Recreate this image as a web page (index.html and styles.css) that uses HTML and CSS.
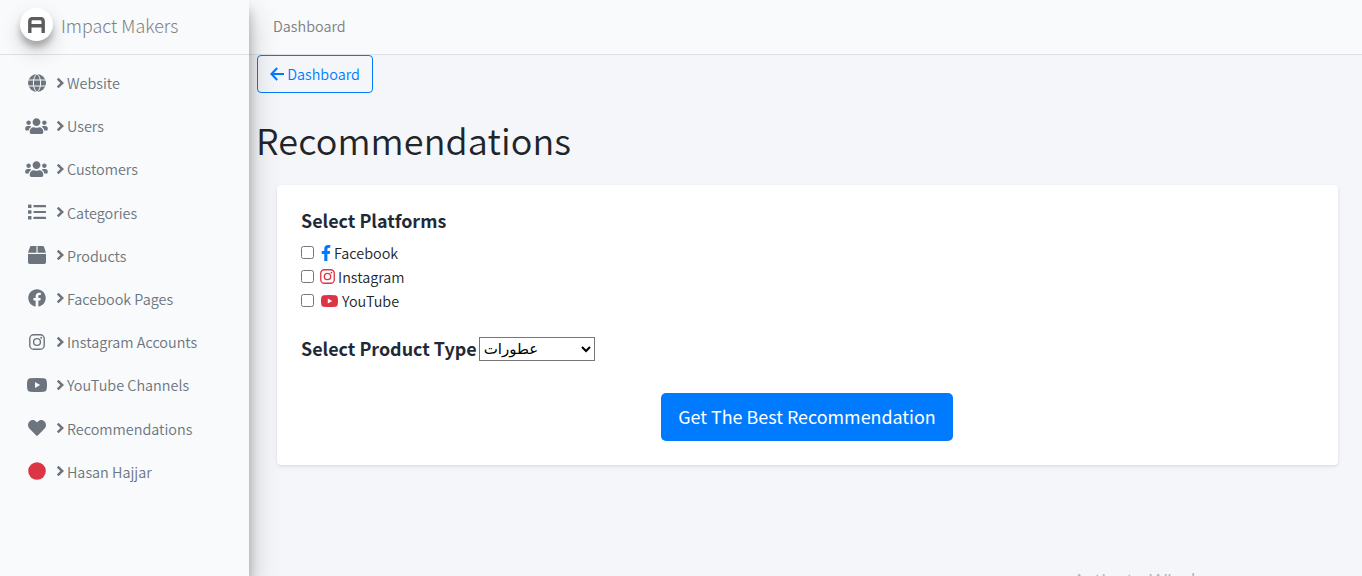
FILE: index.html
```html
<!DOCTYPE html>
<html lang="en">
<head>
<meta charset="utf-8">
<title>Recommendations</title>
<link rel="stylesheet" href="styles.css">
</head>
<body>
<svg class="defs" aria-hidden="true">
  <symbol id="chev" viewBox="0 0 8 12"><path d="M1.700 1.700 6.200 6l-4.500 4.300" fill="none" stroke="currentColor" stroke-width="2.500"/></symbol>
  <symbol id="globe" viewBox="0 0 18 18"><circle cx="9" cy="9" r="9" fill="currentColor"/><path d="M0 6h18M0 12h18M9-.2C4.200 3.500 4.200 14.500 9 18.200c4.800-3.700 4.800-14.700 0-18.400" fill="none" stroke="#f8fafc" stroke-width="1"/></symbol>
  <symbol id="users" viewBox="0 0 640 512"><path fill="currentColor" d="M96 224c35.300 0 64-28.700 64-64s-28.700-64-64-64-64 28.700-64 64 28.700 64 64 64zm448 0c35.300 0 64-28.700 64-64s-28.700-64-64-64-64 28.700-64 64 28.700 64 64 64zm32 32h-64c-17.600 0-33.500 7.100-45.100 18.600 40.300 22.100 68.900 62 75.100 109.400h66c17.700 0 32-14.300 32-32v-32c0-35.300-28.700-64-64-64zm-256 0c61.900 0 112-50.100 112-112S381.900 32 320 32 208 82.100 208 144s50.100 112 112 112zm76.800 32h-8.300c-20.800 10-43.900 16-68.500 16s-47.600-6-68.500-16h-8.300C179.600 288 128 339.600 128 403.200V432c0 26.500 21.500 48 48 48h288c26.500 0 48-21.500 48-48v-28.800c0-63.600-51.600-115.200-115.200-115.200zm-223.700-13.400C161.500 263.100 145.600 256 128 256H64c-35.300 0-64 28.700-64 64v32c0 17.700 14.300 32 32 32h65.900c6.300-47.400 34.900-87.300 75.200-109.400z"/></symbol>
  <symbol id="list" viewBox="0 0 18 16"><g fill="currentColor"><rect y="0.500" width="3.500" height="3.500" rx=".6"/><rect y="6.250" width="3.500" height="3.500" rx=".6"/><rect y="12" width="3.500" height="3.500" rx=".6"/><rect x="5.500" y="1.100" width="12.500" height="2.200" rx=".5"/><rect x="5.500" y="6.900" width="12.500" height="2.200" rx=".5"/><rect x="5.500" y="12.700" width="12.500" height="2.200" rx=".5"/></g></symbol>
  <symbol id="box" viewBox="0 0 512 512"><path fill="currentColor" d="M509.500 184.600L458.900 32.800C452.400 13.200 434.100 0 413.400 0H272v192h238.700c-.4-2.500-.4-5-1.200-7.400zM240 0H98.600c-20.700 0-39 13.200-45.500 32.800L2.500 184.600c-.8 2.400-.8 4.900-1.200 7.400H240V0zM0 224v240c0 26.500 21.500 48 48 48h416c26.500 0 48-21.500 48-48V224H0z"/></symbol>
  <symbol id="fb" viewBox="0 0 512 512"><path fill="currentColor" d="M504 256C504 119 393 8 256 8S8 119 8 256c0 123.780 90.690 226.380 209.250 245V327.690h-63V256h63v-54.640c0-62.150 37-96.480 93.670-96.480 27.140 0 55.520 4.840 55.520 4.840v61h-31.280c-30.800 0-40.410 19.120-40.410 38.730V256h68.780l-11 71.690h-57.780V501C413.310 482.380 504 379.780 504 256z"/></symbol>
  <symbol id="f" viewBox="0 0 320 512"><path fill="currentColor" d="M279.140 288l14.220-92.660h-88.910v-60.130c0-25.350 12.420-50.060 52.240-50.060h40.420V6.260S260.430 0 225.360 0c-73.220 0-121.080 44.380-121.080 124.720v70.620H22.890V288h81.390v224h100.170V288z"/></symbol>
  <symbol id="ig" viewBox="0 0 16 16"><g fill="none" stroke="currentColor" stroke-width="1.400"><rect x=".8" y=".8" width="14.400" height="14.400" rx="3.800"/><circle cx="8" cy="8" r="3.400"/></g><circle cx="12.200" cy="3.800" r="1" fill="currentColor"/></symbol>
  <symbol id="yt" viewBox="0 0 20 14"><path fill="currentColor" fill-rule="evenodd" d="M3 .3Q10-.3 17 .3q2.400.2 2.700 2.700.6 4 0 8-.3 2.500-2.700 2.700-7 .6-14 0Q.6 13.500.3 11q-.6-4 0-8Q.6.500 3 .3zM8 4v6l5.200-3z"/></symbol>
  <symbol id="heart" viewBox="0 0 512 512"><path fill="currentColor" d="M462.300 62.600C407.500 15.900 326 24.300 275.700 76.200L256 96.500l-19.700-20.300C186.100 24.300 104.500 15.900 49.700 62.600c-62.800 53.600-66.100 149.800-9.900 207.900l193.500 199.800c12.500 12.900 32.800 12.900 45.300 0l193.500-199.800c56.300-58.100 53-154.300-9.800-207.900z"/></symbol>
  <symbol id="dot" viewBox="0 0 18 18"><circle cx="9" cy="9" r="8.800" fill="currentColor"/></symbol>
  <symbol id="arrow" viewBox="0 0 14 14"><path d="M7.200 1 1.500 7l5.700 6M1.500 7H14" fill="none" stroke="currentColor" stroke-width="2.100"/></symbol>
</svg>
<div class="app">
  <aside class="sidebar">
    <div class="brand">
      <span class="logo"><svg width="17" height="16" viewBox="0 0 17 16"><path d="M1.800 16V4.500q0-2.900 2.900-2.900h7.600q2.900 0 2.900 2.900V16M2 8.700h13" fill="none" stroke="#5c5c5c" stroke-width="3.400"/></svg></span>
      <span class="brand-name">Impact Makers</span>
    </div>
    <nav class="menu">
      <a class="item"><span class="icon"><svg width="18" height="18"><use href="#globe"/></svg></span><svg class="chev"><use href="#chev"/></svg><span>Website</span></a>
      <a class="item"><span class="icon"><svg width="23" height="18"><use href="#users"/></svg></span><svg class="chev"><use href="#chev"/></svg><span>Users</span></a>
      <a class="item"><span class="icon"><svg width="23" height="18"><use href="#users"/></svg></span><svg class="chev"><use href="#chev"/></svg><span>Customers</span></a>
      <a class="item"><span class="icon"><svg width="18" height="16"><use href="#list"/></svg></span><svg class="chev"><use href="#chev"/></svg><span>Categories</span></a>
      <a class="item"><span class="icon"><svg width="18" height="18"><use href="#box"/></svg></span><svg class="chev"><use href="#chev"/></svg><span>Products</span></a>
      <a class="item"><span class="icon"><svg width="18" height="18"><use href="#fb"/></svg></span><svg class="chev"><use href="#chev"/></svg><span>Facebook Pages</span></a>
      <a class="item"><span class="icon"><svg width="16" height="16"><use href="#ig"/></svg></span><svg class="chev"><use href="#chev"/></svg><span>Instagram Accounts</span></a>
      <a class="item"><span class="icon"><svg width="20" height="14"><use href="#yt"/></svg></span><svg class="chev"><use href="#chev"/></svg><span>YouTube Channels</span></a>
      <a class="item"><span class="icon"><svg width="18" height="18"><use href="#heart"/></svg></span><svg class="chev"><use href="#chev"/></svg><span>Recommendations</span></a>
      <a class="item"><span class="icon red"><svg width="18" height="18"><use href="#dot"/></svg></span><svg class="chev"><use href="#chev"/></svg><span>Hasan Hajjar</span></a>
    </nav>
  </aside>
  <div class="main">
    <header class="topbar"><span>Dashboard</span></header>
    <main class="content">
      <a class="back"><svg width="14" height="14"><use href="#arrow"/></svg><span>Dashboard</span></a>
      <h1 class="title">Recommendations</h1>
      <section class="card">
        <h2 class="label">Select Platforms</h2>
        <label class="check"><input type="checkbox"><svg class="blue" width="10" height="16"><use href="#f"/></svg><span>Facebook</span></label>
        <label class="check"><input type="checkbox"><svg class="red ig" width="15" height="15"><use href="#ig"/></svg><span>Instagram</span></label>
        <label class="check"><input type="checkbox"><svg class="red yt" width="17" height="12"><use href="#yt"/></svg><span>YouTube</span></label>
        <div class="type"><h2 class="label">Select Product Type</h2><select class="select"><option>عطورات</option></select></div>
        <button class="submit">Get The Best Recommendation</button>
      </section>
    </main>
  </div>
</div>
<div class="watermark">Activate Windows</div>
</body>
</html>
```

FILE: styles.css
```css
* { box-sizing: border-box; }
body { margin: 0; height: 576px; overflow: hidden; position: relative; background: #f4f6fa; color: #212529; font: 350 14.400px/24px "Noto Sans CJK JP", "Noto Sans", sans-serif; }
svg { flex: none; display: block; }
.defs { width: 0; height: 0; position: absolute; }
.app { display: flex; height: 576px; }
.sidebar { width: 249px; flex: none; position: relative; z-index: 2; background: #f8fafc; box-shadow: 0 14px 28px rgba(0,0,0,.25), 0 10px 10px rgba(0,0,0,.22); color: #6c757d; }
.brand { height: 55px; border-bottom: 1px solid #dee2e6; padding: 0 0 4px 20px; display: flex; align-items: center; gap: 8px; }
.logo { width: 33px; height: 33px; margin-bottom: 1px; border-radius: 50%; background: #fff; box-shadow: 0 10px 20px rgba(0,0,0,.19), 0 6px 6px rgba(0,0,0,.23); display: flex; align-items: center; justify-content: center; }
.brand-name { font-size: 17.900px; font-weight: 300; color: #808080; white-space: nowrap; }
.menu { padding: 8px 8px 0; display: flex; flex-direction: column; gap: 3.200px; }
.item { height: 40px; padding-left: 16px; display: flex; align-items: center; white-space: nowrap; font-weight: 350; }
.icon { width: 25.600px; display: flex; justify-content: center; margin: 0 6.400px 1px 0; }
.chev { width: 8px; height: 12px; margin-right: 3px; }
.item .chev { margin-bottom: 1px; }
.red { color: #dc3545; }
.blue { color: #007bff; }
.main { flex: 1; min-width: 0; }
.topbar { height: 55px; border-bottom: 1px solid #dee2e6; background: #f8fafc; color: #808080; padding: 14px 24px; }
.content { padding: 0 24px 0 8px; }
.back { width: 116px; height: 38px; border: 1px solid #007bff; border-radius: 4px; color: #007bff; display: flex; align-items: center; justify-content: center; gap: 3px; }
.title { margin: 22px 0 0 -1px; font-size: 36px; line-height: 48px; font-weight: 350; letter-spacing: .1px; }
.card { margin: 22px 0 0 20px; height: 280px; padding: 23px 25px 24px 24px; background: #fff; border-radius: 4px; box-shadow: 0 1px 3px rgba(0,0,0,.07), 0 2px 5px rgba(0,0,0,.05); display: flex; flex-direction: column; }
.label { margin: 0; font-size: 17.900px; line-height: 24px; font-weight: 700; color: #1f2937; white-space: nowrap; }
.label + .check { margin-top: 9px; }
.check { display: flex; align-items: center; height: 24px; gap: 3px; }
.check input { width: 13px; height: 13px; margin: 0 4px 1px 0; }
.check svg { margin-bottom: 1px; }
.check .ig { margin-left: -1px; }
.check .yt { margin-right: 1px; }
.type { display: flex; align-items: center; gap: 2px; height: 24px; margin-top: 23px; }
.select { width: 116px; height: 24px; margin-top: 2px; padding: 0; border: 1px solid #767676; background: #fff; color: #000; font: 15px "DejaVu Sans", sans-serif; }
.submit { width: 292px; height: 48px; flex: none; margin: 33px 0 0; padding: 0 0 2px; align-self: center; border: 0; border-radius: 5px; background: #007bff; color: #fff; font: 400 17.900px/24px "Noto Sans CJK JP", sans-serif; white-space: nowrap; }
.watermark { position: absolute; left: 1073px; top: 567px; color: #b4b7bb; font: 19.300px/28px "Open Sans", sans-serif; white-space: nowrap; }
```
